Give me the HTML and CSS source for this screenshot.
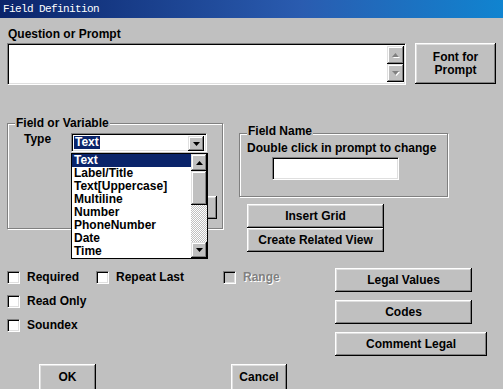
FILE: index.html
```html
<!DOCTYPE html>
<html lang="en">
<head>
    <meta charset="UTF-8">
    <meta name="viewport" content="width=device-width, initial-scale=1.0">
    <title>Field Definition</title>
    <link rel="stylesheet" href="styles.css">
</head>
<body>
    <div class="titlebar">Field Definition</div>

    <div class="dialog">
        <div class="prompt-label">Question or Prompt</div>
        <div class="prompt-row">
            <div class="prompt-box sunken">
                <div class="prompt-text"></div>
                <div class="spin">
                    <div class="scroll-btn disabled">
                        <svg width="7" height="4" viewBox="0 0 7 4"><path d="M3.5 0 L7 4 L0 4 Z"/></svg>
                    </div>
                    <div class="scroll-btn disabled">
                        <svg width="7" height="4" viewBox="0 0 7 4"><path d="M0 0 L7 0 L3.5 4 Z"/></svg>
                    </div>
                </div>
            </div>
            <button class="btn font-btn">Font for<br>Prompt</button>
        </div>

        <div class="middle-row">
            <div class="group var-group">
                <span class="group-title">Field or Variable</span>
                <div class="type-row">
                    <span class="type-label">Type</span>
                    <div class="combo">
                        <div class="combo-field sunken">
                            <span class="combo-value">Text</span>
                            <span class="scroll-btn combo-arrow">
                                <svg width="7" height="4" viewBox="0 0 7 4"><path d="M0 0 L7 0 L3.5 4 Z"/></svg>
                            </span>
                        </div>
                        <div class="type-list">
                            <ul class="items">
                                <li class="selected">Text</li>
                                <li>Label/Title</li>
                                <li>Text[Uppercase]</li>
                                <li>Multiline</li>
                                <li>Number</li>
                                <li>PhoneNumber</li>
                                <li>Date</li>
                                <li>Time</li>
                            </ul>
                            <div class="vscroll">
                                <div class="scroll-btn up">
                                    <svg width="7" height="4" viewBox="0 0 7 4"><path d="M3.5 0 L7 4 L0 4 Z"/></svg>
                                </div>
                                <div class="scroll-btn thumb"></div>
                                <div class="track"></div>
                                <div class="scroll-btn down">
                                    <svg width="7" height="4" viewBox="0 0 7 4"><path d="M0 0 L7 0 L3.5 4 Z"/></svg>
                                </div>
                            </div>
                        </div>
                    </div>
                </div>
                <div class="under-row">
                    <button class="btn under-btn"></button>
                </div>
            </div>

            <div class="right-col">
                <div class="group name-group">
                    <span class="group-title">Field Name</span>
                    <div class="name-hint">Double click in prompt to change</div>
                    <div class="name-input sunken"></div>
                </div>
                <div class="grid-btns">
                    <button class="btn wide-btn">Insert Grid</button>
                    <button class="btn wide-btn">Create Related View</button>
                </div>
            </div>
        </div>

        <div class="lower-row">
            <div class="checks">
                <label class="check"><span class="box sunken"></span>Required</label>
                <label class="check"><span class="box sunken"></span>Repeat Last</label>
                <label class="check disabled"><span class="box sunken"></span>Range</label>
                <label class="check"><span class="box sunken"></span>Read Only</label>
                <span></span><span></span>
                <label class="check"><span class="box sunken"></span>Soundex</label>
            </div>
            <div class="legal-btns">
                <button class="btn wide-btn">Legal Values</button>
                <button class="btn wide-btn">Codes</button>
                <button class="btn comment-btn">Comment Legal</button>
            </div>
        </div>

        <div class="footer">
            <button class="btn ok-btn">OK</button>
            <button class="btn cancel-btn">Cancel</button>
        </div>
    </div>
</body>
</html>
```

FILE: styles.css
```css
* {
    box-sizing: border-box;
}
body {
    margin: 0;
    width: 503px;
    height: 389px;
    overflow: hidden;
    background: #c0c0c0;
    font-family: "Liberation Sans", Arial, sans-serif;
    font-size: 12px;
    font-weight: bold;
    color: #000;
}
.titlebar {
    height: 18px;
    line-height: 18px;
    padding-left: 3px;
    background: linear-gradient(to right, #0a246a 0%, #2a5cb0 60%, #1084d0 100%);
    color: #fff;
    font-family: "Liberation Mono", "DejaVu Sans Mono", monospace;
    font-weight: normal;
    font-size: 11px;
    letter-spacing: -0.6px;
}
.dialog {
    display: flex;
    flex-direction: column;
}

/* bevels */
.sunken {
    background: #fff;
    border: 1px solid;
    border-color: #808080 #fff #fff #808080;
    box-shadow: inset 1px 1px 0 #000, inset -1px -1px 0 #dfdfdf;
}
.btn {
    font: inherit;
    color: #000;
    background: #c0c0c0;
    border: none;
    padding: 0;
    line-height: 13px;
    box-shadow: inset -1px -1px 0 #000, inset 1px 1px 0 #fff,
                inset -2px -2px 0 #808080, inset 2px 2px 0 #dfdfdf;
}
.scroll-btn {
    display: flex;
    align-items: center;
    justify-content: center;
    background: #c0c0c0;
    box-shadow: inset -1px -1px 0 #000, inset 1px 1px 0 #dfdfdf,
                inset -2px -2px 0 #808080, inset 2px 2px 0 #fff;
}
.scroll-btn svg {
    fill: #000;
}
.scroll-btn.disabled svg {
    fill: #808080;
    filter: drop-shadow(1px 1px 0 #fff);
}
.group {
    border: 1px solid #808080;
    box-shadow: 1px 1px 0 #fff, inset 1px 1px 0 #fff;
}
.group-title {
    display: block;
    width: fit-content;
    line-height: 14px;
    padding: 0 1px;
    margin-left: 7px;
    background: #c0c0c0;
}

/* prompt */
.prompt-label {
    line-height: 14px;
    margin: 9px 0 0 8px;
}
.prompt-row {
    display: flex;
    margin: 2px 0 0 7px;
}
.prompt-box {
    width: 399px;
    height: 42px;
    display: flex;
    padding: 2px 1px 2px 2px;
}
.prompt-text {
    flex: 1;
}
.spin {
    width: 17px;
    display: flex;
    flex-direction: column;
}
.spin .scroll-btn {
    height: 19px;
}
.font-btn {
    width: 81px;
    height: 41px;
    margin-left: 9px;
}

/* field or variable */
.middle-row {
    display: flex;
    align-items: flex-start;
    margin-top: 38px;
}
.var-group {
    width: 216px;
    height: 106px;
    margin-left: 7px;
}
.var-group .group-title {
    margin-top: -8px;
}
.type-row {
    display: flex;
    margin-top: 3px;
}
.type-label {
    width: 47px;
    margin: -1px 0 0 16px;
    line-height: 14px;
}
.combo {
    position: relative;
    width: 136px;
}
.combo-field {
    height: 19px;
    display: flex;
    align-items: flex-start;
    padding: 2px;
}
.combo-value {
    line-height: 13px;
    padding: 0 1px;
    background: #0a246a;
    color: #fff;
}
.combo-arrow {
    width: 16px;
    height: 15px;
    margin-left: auto;
}
.type-list {
    position: absolute;
    top: 100%;
    left: 0;
    z-index: 2;
    width: 137px;
    height: 106px;
    margin-top: 1px;
    display: flex;
    border: 1px solid #000;
    background: #fff;
}
.items {
    flex: 1;
    list-style: none;
    margin: 0;
    padding: 0;
}
.items li {
    line-height: 13px;
    padding-left: 2px;
}
.items li.selected {
    background: #0a246a;
    color: #fff;
}
.vscroll {
    width: 16px;
    display: flex;
    flex-direction: column;
}
.vscroll .up {
    height: 17px;
}
.vscroll .thumb {
    height: 34px;
}
.vscroll .down {
    height: 16px;
}
.track {
    flex: 1;
    background-image: repeating-conic-gradient(#c0c0c0 0% 25%, #fff 0% 50%);
    background-size: 2px 2px;
}
.under-row {
    display: flex;
    justify-content: flex-end;
    margin: 44px 5px 0 0;
}
.under-btn {
    width: 66px;
    height: 23px;
}

/* field name */
.right-col {
    margin: 10px 0 0 16px;
}
.name-group {
    width: 209px;
    height: 64px;
}
.name-group .group-title {
    margin-top: -10px;
}
.name-hint {
    line-height: 14px;
    margin: 3px 0 0 7px;
}
.name-input {
    width: 127px;
    height: 23px;
    margin: 2px 0 0 32px;
}
.grid-btns {
    display: flex;
    flex-direction: column;
    margin: 7px 0 0 8px;
}
.wide-btn {
    width: 137px;
    height: 24px;
}

/* checkboxes and legal buttons */
.lower-row {
    display: flex;
    align-items: flex-start;
}
.checks {
    flex: none;
    width: 328px;
    margin: 19px 0 0 7px;
    display: grid;
    grid-template-columns: 89px 127px auto;
    grid-auto-rows: 13px;
    row-gap: 11px;
}
.check {
    display: flex;
    align-items: center;
    gap: 7px;
    line-height: 13px;
    white-space: nowrap;
}
.check .box {
    width: 13px;
    height: 13px;
}
.check.disabled {
    color: #808080;
    text-shadow: 1px 1px 0 #fff;
}
.check.disabled .box {
    background: #c0c0c0;
}
.legal-btns {
    display: flex;
    flex-direction: column;
    gap: 8px;
    margin-top: 16px;
}
.comment-btn {
    width: 152px;
    height: 24px;
}

/* footer */
.footer {
    display: flex;
    margin-top: 8px;
}
.ok-btn {
    width: 57px;
    height: 27px;
    margin-left: 39px;
}
.cancel-btn {
    width: 56px;
    height: 27px;
    margin-left: 135px;
}
```
